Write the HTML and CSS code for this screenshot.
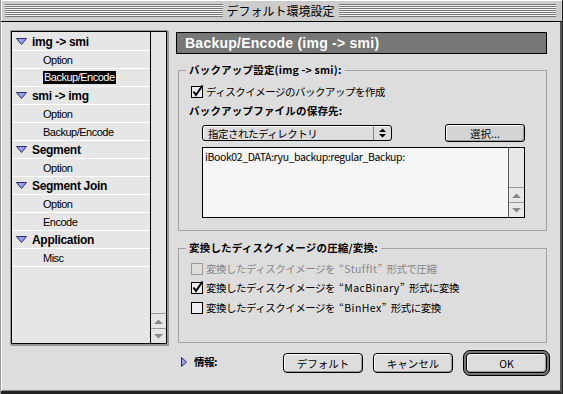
FILE: index.html
```html
<!DOCTYPE html>
<html lang="ja">
<head>
  <meta charset="UTF-8">
  <title>デフォルト環境設定</title>
  <link rel="stylesheet" href="styles.css">
</head>
<body>
  <div class="window">
    <div class="titlebar">
      <span class="stripes"></span>
      <span class="title">デフォルト環境設定</span>
      <span class="stripes"></span>
    </div>

    <div class="content">
      <!-- Kategorien -->
      <div class="sidebar">
        <ul class="tree">
          <li class="node"><svg width="11" height="7" viewBox="0 0 11 7"><path d="M0.5 0.5h10L5.5 6.5z" fill="#9c9cf4" stroke="#2a2a66"/></svg>img -&gt; smi</li>
          <li class="leaf">Option</li>
          <li class="leaf"><span class="selected">Backup/Encode</span></li>
          <li class="node"><svg width="11" height="7" viewBox="0 0 11 7"><path d="M0.5 0.5h10L5.5 6.5z" fill="#9c9cf4" stroke="#2a2a66"/></svg>smi -&gt; img</li>
          <li class="leaf">Option</li>
          <li class="leaf">Backup/Encode</li>
          <li class="node"><svg width="11" height="7" viewBox="0 0 11 7"><path d="M0.5 0.5h10L5.5 6.5z" fill="#9c9cf4" stroke="#2a2a66"/></svg>Segment</li>
          <li class="leaf">Option</li>
          <li class="node"><svg width="11" height="7" viewBox="0 0 11 7"><path d="M0.5 0.5h10L5.5 6.5z" fill="#9c9cf4" stroke="#2a2a66"/></svg>Segment Join</li>
          <li class="leaf">Option</li>
          <li class="leaf">Encode</li>
          <li class="node"><svg width="11" height="7" viewBox="0 0 11 7"><path d="M0.5 0.5h10L5.5 6.5z" fill="#9c9cf4" stroke="#2a2a66"/></svg>Application</li>
          <li class="leaf">Misc</li>
        </ul>
        <div class="vscroll">
          <div class="arrow"><svg width="9" height="5" viewBox="0 0 9 5"><path d="M0 5h9L4.5 0.5z" fill="#888"/></svg></div>
          <div class="arrow"><svg width="9" height="5" viewBox="0 0 9 5"><path d="M0 0h9L4.5 4.5z" fill="#888"/></svg></div>
        </div>
      </div>

      <!-- Einstellungen -->
      <div class="main">
        <div class="panel-title">Backup/Encode (img -&gt; smi)</div>

        <fieldset class="group backup">
          <legend>バックアップ設定(img -&gt; smi):</legend>
          <div class="check first">
            <svg width="13" height="13" viewBox="0 0 13 13"><rect x="0.5" y="1.5" width="11" height="11" fill="#eee" stroke="#000"/><path d="M2.5 6.5L5 10L11.5 0.5" stroke="#000" stroke-width="2" fill="none"/></svg>
            ディスクイメージのバックアップを作成
          </div>
          <div class="field-label">バックアップファイルの保存先:</div>
          <div class="dest-row">
            <div class="popup">
              <span class="popup-text">指定されたディレクトリ</span>
              <span class="popup-arrows"><svg width="7" height="10" viewBox="0 0 7 10"><path d="M0 4h7L3.5 0.5zM0 6h7L3.5 9.5z" fill="#000"/></svg></span>
            </div>
            <button class="btn small">選択...</button>
          </div>
          <div class="pathbox">
            <div class="path">iBook02_DATA:ryu_backup:regular_Backup:</div>
            <div class="vscroll">
              <div class="arrow"><svg width="9" height="5" viewBox="0 0 9 5"><path d="M0 5h9L4.5 0.5z" fill="#888"/></svg></div>
              <div class="arrow"><svg width="9" height="5" viewBox="0 0 9 5"><path d="M0 0h9L4.5 4.5z" fill="#888"/></svg></div>
            </div>
          </div>
        </fieldset>

        <fieldset class="group convert">
          <legend>変換したディスクイメージの圧縮/変換:</legend>
          <div class="check disabled">
            <svg width="13" height="13" viewBox="0 0 13 13"><rect x="0.5" y="1.5" width="11" height="11" fill="#ddd" stroke="#999"/></svg>
            <span>変換したディスクイメージを <span class="q">“StuffIt”</span> 形式で圧縮</span>
          </div>
          <div class="check">
            <svg width="13" height="13" viewBox="0 0 13 13"><rect x="0.5" y="1.5" width="11" height="11" fill="#eee" stroke="#000"/><path d="M2.5 6.5L5 10L11.5 0.5" stroke="#000" stroke-width="2" fill="none"/></svg>
            <span>変換したディスクイメージを <span class="q">“MacBinary”</span> 形式に変換</span>
          </div>
          <div class="check">
            <svg width="13" height="13" viewBox="0 0 13 13"><rect x="0.5" y="1.5" width="11" height="11" fill="#eee" stroke="#000"/></svg>
            <span>変換したディスクイメージを <span class="q">“BinHex”</span> 形式に変換</span>
          </div>
        </fieldset>

        <div class="footer">
          <div class="info"><svg width="6" height="10" viewBox="0 0 6 10"><path d="M0.5 0.5v9L5.5 5z" fill="#9c9cf4" stroke="#2a2a66"/></svg>情報:</div>
          <div class="buttons">
            <button class="btn">デフォルト</button>
            <button class="btn">キャンセル</button>
            <div class="default-ring"><button class="btn">OK</button></div>
          </div>
        </div>
      </div>
    </div>
  </div>
</body>
</html>
```

FILE: styles.css
```css
/* Grundlayout */
* { box-sizing: border-box; }
body {
  margin: 0;
  background: #000;
  font-family: "Noto Sans CJK JP", sans-serif;
  font-size: 10.5px;
  letter-spacing: -0.5px;
  color: #000;
}
.window {
  width: 563px;
  height: 394px;
  background: #ddd;
  border-left: 1px solid #999;
  border-right: 1px solid #222;
  display: flex;
  flex-direction: column;
}

/* Titelleiste */
.titlebar {
  height: 22px;
  flex: none;
  display: flex;
  align-items: center;
  gap: 3px;
  padding: 0 6px 0 4px;
  background: #ccc;
  border-bottom: 1px solid #000;
  box-shadow: inset 1px 1px 0 #fff;
}
.stripes {
  flex: 1;
  height: 13px;
  background: repeating-linear-gradient(#777 0 1px, #f2f2f2 1px 2px);
}
.title {
  font-size: 12px;
  line-height: 14px;
  letter-spacing: 0;
  padding: 0 1px;
}

.content {
  flex: 1;
  display: flex;
  align-items: flex-start;
  padding: 9px 0 0 10px;
  border-right: 2px solid #555;
  border-bottom: 3px solid #222;
  box-shadow: inset 1px 0 0 #fff, inset 0 -1px 0 #888;
}

/* Seitenliste */
.sidebar {
  width: 156px;
  height: 313px;
  flex: none;
  display: flex;
  border: 1px solid #000;
  background: #e6e6e6;
  box-shadow: 0 0 0 1px #999, 1px 1px 0 1px #999;
}
.tree {
  flex: 1;
  margin: 0;
  padding: 1px 0 0;
  list-style: none;
}
.tree li {
  height: 18px;
  border-bottom: 1px solid #fff;
  display: flex;
  align-items: center;
  font-family: "Liberation Sans", sans-serif;
  font-size: 11px;
  letter-spacing: -0.5px;
}
.tree .node {
  font-size: 12px;
  font-weight: bold;
  letter-spacing: -0.3px;
  padding-left: 4px;
  gap: 5px;
}
.tree .leaf { padding-left: 31px; }
.selected {
  background: #000;
  color: #fff;
  padding: 0 1px;
  line-height: 13px;
}
.vscroll {
  width: 16px;
  flex: none;
  border-left: 1px solid #000;
  display: flex;
  flex-direction: column;
  justify-content: flex-end;
}
.vscroll .arrow {
  height: 15px;
  border-top: 1px solid #999;
  display: flex;
  align-items: center;
  justify-content: center;
}

/* Hauptbereich */
.main {
  width: 371px;
  margin-left: 9px;
  padding-top: 1px;
  display: flex;
  flex-direction: column;
}
.panel-title {
  height: 22px;
  border: 1px solid #000;
  background: #777;
  color: #fff;
  font: bold 14px "Liberation Sans", sans-serif;
  letter-spacing: 0.25px;
  padding-left: 8px;
  display: flex;
  align-items: center;
}

.group {
  margin: 9px 0 0 2px;
  padding: 0 0 12px 7px;
  border: 1px solid #a2a2a2;
  min-width: 0;
}
.group legend {
  font-weight: bold;
  letter-spacing: 0.2px;
  line-height: 14px;
  padding: 0 3px;
}
.group.convert { margin-top: 10px; padding-bottom: 27px; }

.check {
  display: flex;
  align-items: center;
  gap: 2px;
  height: 16px;
  margin: 3px 0 0 5px;
}
.check.first { margin-top: 6px; }
.convert .check:first-of-type { margin-top: 5px; }
.convert .check:last-child { margin-top: 4px; }
.check.disabled { color: #888; }
.check .q { letter-spacing: 0.4px; padding: 0 2px; }

.field-label {
  font-weight: bold;
  letter-spacing: 0.2px;
  line-height: 16px;
  margin: 4px 0 0 3px;
}
.dest-row {
  display: flex;
  align-items: center;
  height: 18px;
  margin: 5px 21px 0 16px;
}
.popup {
  width: 190px;
  height: 16px;
  display: flex;
  align-items: center;
  border: 1px solid #000;
  border-radius: 3px;
  background: #ddd;
  box-shadow: inset 1px 1px 0 #fff;
}
.popup-text { flex: 1; padding-left: 5px; }
.popup-arrows {
  width: 18px;
  height: 100%;
  display: flex;
  align-items: center;
  justify-content: center;
  border-left: 1px solid #888;
}
.pathbox {
  height: 71px;
  margin: 5px 21px 0 16px;
  display: flex;
  border: 1px solid #000;
  background: #f6f6f6;
}
.path {
  flex: 1;
  padding: 2px 0 0 2px;
  line-height: 14px;
  letter-spacing: -0.4px;
}
.pathbox .vscroll { border-left-color: #555; background: #e8e8e8; }

/* Schaltflächen */
.btn {
  width: 80px;
  height: 20px;
  padding: 0;
  border: 1px solid #000;
  border-radius: 4px;
  background: #ddd;
  box-shadow: inset 1px 1px 0 #fff, inset -1px -1px 0 #999;
  font: inherit;
  color: #000;
}
.btn.small {
  height: 18px;
  border-radius: 3px;
  margin-left: auto;
  background: #d4d4d4;
}
.footer {
  display: flex;
  margin: 4px -3px 0 0;
  padding-left: 5px;
}
.info {
  display: flex;
  align-items: center;
  gap: 7px;
  line-height: 14px;
  font-weight: bold;
}
.buttons {
  margin-left: auto;
  margin-top: 3px;
  display: flex;
  align-items: center;
  gap: 10px;
}
.default-ring {
  padding: 2px;
  border: 1px solid #000;
  border-radius: 7px;
  background: #777;
}
.default-ring .btn { width: 81px; }
```
